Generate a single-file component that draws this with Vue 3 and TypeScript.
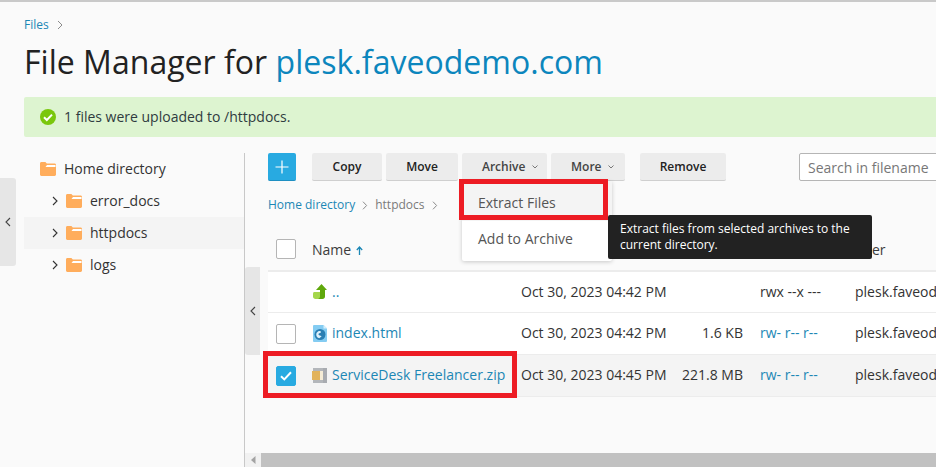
<script setup lang="ts">
interface Dir { name: string; active?: boolean }
const dirs: Dir[] = [{ name: 'error_docs' }, { name: 'httpdocs', active: true }, { name: 'logs' }]
</script>

<template>
  <div class="page">
    <div class="crumb"><a>Files</a><svg class="sep" width="7" height="10" viewBox="0 0 7 10"><path d="M1 1l4 4-4 4" fill="none" stroke="#8b8b8b" stroke-width="1"/></svg></div>
    <h1>File Manager for <span>plesk.faveodemo.com</span></h1>
    <div class="msg">
      <svg width="16" height="16" viewBox="0 0 16 16"><circle cx="8" cy="8" r="8" fill="#7ac70c"/><path d="M4 8.300l2.800 2.700L12 5.600" fill="none" stroke="#fff" stroke-width="2"/></svg>
      <span>1 files were uploaded to /httpdocs.</span>
    </div>
    <div class="main">
      <aside class="tree">
        <div class="node root">
          <svg class="folder" width="16" height="14" viewBox="0 0 16 14"><path d="M0 1.500C0 .7.6 0 1.400 0h4l1.400 1.600h7.800c.8 0 1.400.6 1.400 1.400v9.600c0 .8-.6 1.400-1.400 1.400H1.400C.6 14 0 13.400 0 12.600z" fill="#ffad5c"/><path d="M7 3h8.500v2H5.500z" fill="#fff"/></svg>
          <span>Home directory</span>
        </div>
        <div v-for="d in dirs" :key="d.name" class="node child" :class="{ active: d.active }">
          <svg class="arrow" width="6" height="10" viewBox="0 0 6 10"><path d="M1 1l4 4-4 4" fill="none" stroke="#333" stroke-width="1.100"/></svg>
          <svg class="folder" width="16" height="14" viewBox="0 0 16 14"><path d="M0 1.500C0 .7.6 0 1.400 0h4l1.400 1.600h7.800c.8 0 1.400.6 1.400 1.400v9.600c0 .8-.6 1.400-1.400 1.400H1.400C.6 14 0 13.400 0 12.600z" fill="#ffad5c"/><path d="M7 3h8.500v2H5.500z" fill="#fff"/></svg>
          <span>{{ d.name }}</span>
        </div>
      </aside>
      <section class="pane">
        <div class="toolbar">
          <button class="plus"><svg width="14" height="14" viewBox="0 0 14 14"><path d="M7 .5v13M.5 7h13" stroke="#fff" stroke-width="1.200"/></svg></button>
          <button class="btn copy">Copy</button>
          <button class="btn move">Move</button>
          <button class="btn drop archive">Archive<svg width="6" height="4" viewBox="0 0 6 4"><path d="M.5.5L3 3 5.500.5" fill="none" stroke="#777"/></svg></button>
          <button class="btn drop more">More<svg width="6" height="4" viewBox="0 0 6 4"><path d="M.5.5L3 3 5.500.5" fill="none" stroke="#777"/></svg></button>
          <button class="btn remove">Remove</button>
          <div class="search">Search in filename</div>
        </div>
        <div class="path">
          <a>Home directory</a>
          <svg width="6" height="9" viewBox="0 0 6 9"><path d="M1 .7l3.600 3.800L1 8.300" fill="none" stroke="#8b8b8b"/></svg>
          <span>httpdocs</span>
          <svg width="6" height="9" viewBox="0 0 6 9"><path d="M1 .7l3.600 3.800L1 8.300" fill="none" stroke="#8b8b8b"/></svg>
        </div>
        <div class="row head">
          <div class="cbcell"><i class="cb"></i></div>
          <div class="name">Name <svg class="sort" width="7" height="9" viewBox="0 0 7 9"><path d="M3.500 9V1.500M.8 4l2.700-3 2.700 3" fill="none" stroke="#1c87b5" stroke-width="1.300"/></svg></div>
          <div></div><div></div><div></div>
          <div>User</div>
        </div>
        <div class="row item r1">
          <div class="cbcell"></div>
          <div class="name file">
            <svg width="16" height="16" viewBox="0 0 16 16"><path d="M1 9.500C1 8.600 1.600 8 2.500 8H8v7H3.500C2 15 1 14 1 12.500z" fill="#a5d64c"/><path d="M9.500 0L15 6h-2v6.500c0 1.500-1 2.500-2.500 2.500H6c1.300-.4 2-1.300 2-2.500V6H4z" fill="#5fa80c"/></svg>
            <a>..</a>
          </div>
          <div class="t">Oct 30, 2023 04:42 PM</div>
          <div class="t size"></div>
          <div class="t">rwx --x ---</div>
          <div class="t">plesk.faveodemo.com</div>
        </div>
        <div class="row item r2">
          <div class="cbcell"><i class="cb"></i></div>
          <div class="name file">
            <svg width="16" height="17" viewBox="0 0 16 17"><path d="M2 0h9.500L15 3.500V16a1 1 0 0 1-1 1H2a1 1 0 0 1-1-1V1a1 1 0 0 1 1-1z" fill="#84ccf2"/><path d="M11.500 0L15 3.500h-3.500z" fill="#d6effb"/><circle cx="8" cy="9.500" r="5.500" fill="#2b7fb3"/><path d="M4.500 8c1.500-2.500 4-2.500 4.500-1.300s-2.500 1-2.500 2.600 2.500 1 3 2.200l-2.300 1.700C4.500 12.700 3.800 10.300 4.500 8z" fill="#dff1fb"/></svg>
            <a>index.html</a>
          </div>
          <div class="t">Oct 30, 2023 04:42 PM</div>
          <div class="t size">1.6 KB</div>
          <div class="t perm">rw- r-- r--</div>
          <div class="t">plesk.faveodemo.com</div>
        </div>
        <div class="row item r3 selected">
          <div class="cbcell"><i class="cb on"><svg width="12" height="10" viewBox="0 0 12 10"><path d="M1 5.200l3.300 3.200L11 1.200" fill="none" stroke="#fff" stroke-width="2"/></svg></i></div>
          <div class="name file">
            <svg width="16" height="16" viewBox="0 0 16 16"><rect x="1" y="0" width="14" height="3" fill="#b3b6ba"/><rect x="1" y="12" width="14" height="3" fill="#b3b6ba"/><rect x="0" y="3" width="8" height="9" fill="#e2b35c"/><rect x="8" y="3" width="3" height="9" fill="#f5ecd6"/><rect x="11" y="0" width="4" height="15" fill="#a8abb0"/></svg>
            <a>ServiceDesk Freelancer.zip</a>
          </div>
          <div class="t">Oct 30, 2023 04:45 PM</div>
          <div class="t size">221.8 MB</div>
          <div class="t perm">rw- r-- r--</div>
          <div class="t">plesk.faveodemo.com</div>
        </div>
        <div class="spacer"></div>
        <div class="scroll">
          <div class="sarrow"><svg width="5" height="8" viewBox="0 0 5 8"><path d="M4.500 0v8L0 4z" fill="#a3a3a3"/></svg></div>
          <div class="thumb"></div>
        </div>
      </section>
    </div>

    <div class="toggle t1"><svg width="6" height="10" viewBox="0 0 6 10"><path d="M5 1L1 5l4 4" fill="none" stroke="#444" stroke-width="1.100"/></svg></div>
    <div class="toggle t2"><svg width="6" height="10" viewBox="0 0 6 10"><path d="M5 1L1 5l4 4" fill="none" stroke="#444" stroke-width="1.100"/></svg></div>

    <div class="menu">
      <div class="mi hover">Extract Files</div>
      <div class="mi second">Add to Archive</div>
    </div>
    <div class="tip">Extract files from selected archives to the current directory.</div>
    <div class="mark m1"></div>
    <div class="mark m2"></div>
  </div>
</template>

<style>
html, body { margin: 0; background: #fafafa; }
</style>

<style scoped>
.page {
  position: relative;
  width: 936px;
  height: 467px;
  overflow: hidden;
  box-sizing: border-box;
  display: flex;
  flex-direction: column;
  background: #fafafa;
  border-top: 2px solid #c9c9c9;
  padding-left: 24px;
  font-family: "Open Sans", sans-serif;
  font-size: 14px;
  color: #333;
}
a { color: #1c87b5; }
.crumb {
  height: 16px;
  margin-top: 15px;
  font-size: 12px;
  line-height: 16px;
  display: flex;
  align-items: center;
  gap: 8px;
  flex: none;
}
h1 {
  margin: 7px 0 0;
  height: 44px;
  flex: none;
  font-size: 32px;
  line-height: 44px;
  font-weight: 400;
  letter-spacing: .03px;
  color: #222;
  white-space: nowrap;
}
h1 span { color: #0c86bd; }
.msg {
  margin-top: 13px;
  height: 40px;
  flex: none;
  border-radius: 2px 0 0 2px;
  background: #ddf4d0;
  display: flex;
  align-items: center;
  gap: 8px;
  padding-left: 16px;
  color: #2f3b40;
}
.msg span { margin-bottom: 2px; }
.main {
  flex: 1;
  margin-top: 16px;
  display: flex;
  min-height: 0;
}
.tree {
  flex: none;
  width: 221px;
  box-sizing: border-box;
  border-right: 1px solid #c8c8c8;
}
.node {
  height: 32px;
  display: flex;
  align-items: center;
}
.node span { margin-bottom: 2px; }
.root { padding-left: 16px; gap: 8px; }
.child { padding-left: 28px; }
.child .arrow { margin-right: 8px; }
.child .folder { margin-right: 8px; }
.active { background: #f4f4f4; }
.pane {
  flex: none;
  width: 720px;
  padding-left: 23px;
  box-sizing: border-box;
  display: flex;
  flex-direction: column;
  min-height: 0;
}
.toolbar {
  height: 28px;
  flex: none;
  display: flex;
}
.toolbar > * { flex: none; }
button {
  font-family: inherit;
  box-sizing: border-box;
  height: 28px;
  padding: 0;
  border: 0;
  border-radius: 2px;
}
.plus {
  width: 28px;
  background: #28aae1;
  border-bottom: 1px solid #1e8fc2;
  display: flex;
  align-items: center;
  justify-content: center;
  margin-right: 16px;
}
.btn {
  background: #ececec;
  border-bottom: 1px solid #cfcfcf;
  color: #222;
  font-size: 12px;
  font-weight: 600;
  display: flex;
  align-items: center;
  justify-content: center;
  margin-right: 4px;
}
.drop { justify-content: flex-start; padding-left: 20px; gap: 7px; color: #444; }
.copy { width: 70px; }
.move { width: 72px; }
.archive { width: 85px; }
.more { width: 74px; margin-right: 15px; }
.remove { width: 86px; margin-right: 73px; }
.search {
  width: 200px;
  height: 28px;
  box-sizing: border-box;
  border: 1px solid #b5b5b5;
  border-radius: 2px;
  background: #fff;
  padding-left: 8px;
  line-height: 28px;
  color: #777;
}
.path {
  height: 16px;
  margin-top: 16px;
  font-size: 12px;
  line-height: 16px;
  display: flex;
  align-items: center;
  gap: 7px;
  flex: none;
}
.path span { color: #7a7a7a; }
.row {
  display: grid;
  grid-template-columns: 44px 209px 145px 77px 112px 200px;
  align-items: center;
  width: 787px;
  white-space: nowrap;
  flex: none;
}
.row > :nth-child(5) { margin-left: 17px; }
.head {
  height: 40px;
  margin-top: 16px;
  padding-bottom: 1px;
  border-bottom: 2px solid #ececec;
  color: #3c3c3c;
}
.sort { margin-left: 1px; }
.cbcell { padding-left: 8px; display: flex; }
.cb {
  width: 20px;
  height: 20px;
  box-sizing: border-box;
  border: 1px solid #b5b5b5;
  border-radius: 2px;
  background: #fff;
  display: flex;
  align-items: center;
  justify-content: center;
}
.cb.on { background: #28aae1; border-color: #28aae1; }
.item {
  border-bottom: 1px solid #ececec;
  background: #fff;
  color: #333;
}
.r1 { height: 40px; }
.r2 { height: 41px; }
.r3 { height: 41px; }
.selected { background: #f4f4f4; }
.t { margin-bottom: 2px; }
.file { display: flex; align-items: center; gap: 4px; }
.file svg { flex: none; }
.file a { margin-bottom: 2px; }
.size { text-align: right; }
.perm { color: #1c87b5; }
.spacer { flex: 1; }
.scroll {
  height: 14px;
  flex: none;
  margin-left: -23px;
  display: flex;
  background: #f1f1f1;
}
.sarrow {
  width: 16px;
  display: flex;
  align-items: center;
  justify-content: center;
}
.thumb { flex: 1; background: #c1c1c1; }
.toggle {
  position: absolute;
  background: #e6e6e6;
  display: flex;
  align-items: center;
  justify-content: center;
  height: 88px;
}
.t1 { left: 0; top: 176px; width: 16px; border-radius: 0 3px 3px 0; }
.t2 { left: 245px; top: 265px; width: 15px; border-radius: 3px 0 0 3px; }
.menu {
  position: absolute;
  left: 462px;
  top: 179px;
  width: 150px;
  height: 80px;
  background: #fff;
  border-radius: 2px;
  box-shadow: 0 1px 4px rgba(0, 0, 0, .2);
  color: #555;
}
.mi { height: 40px; box-sizing: border-box; padding-left: 16px; display: flex; align-items: center; }
.hover { background: #f4f4f4; padding-top: 2px; }
.second { padding-bottom: 6px; }
.tip {
  position: absolute;
  left: 608px;
  top: 213px;
  width: 264px;
  height: 44px;
  box-sizing: border-box;
  padding: 6px 12px;
  background: #222;
  border-radius: 2px;
  color: #fff;
  font-size: 12px;
  line-height: 16px;
}
.mark { position: absolute; border: 5px solid #ed1c24; box-sizing: border-box; }
.m1 { left: 459px; top: 177px; width: 149px; height: 41px; }
.m2 { left: 263px; top: 349px; width: 254px; height: 47px; }
</style>
